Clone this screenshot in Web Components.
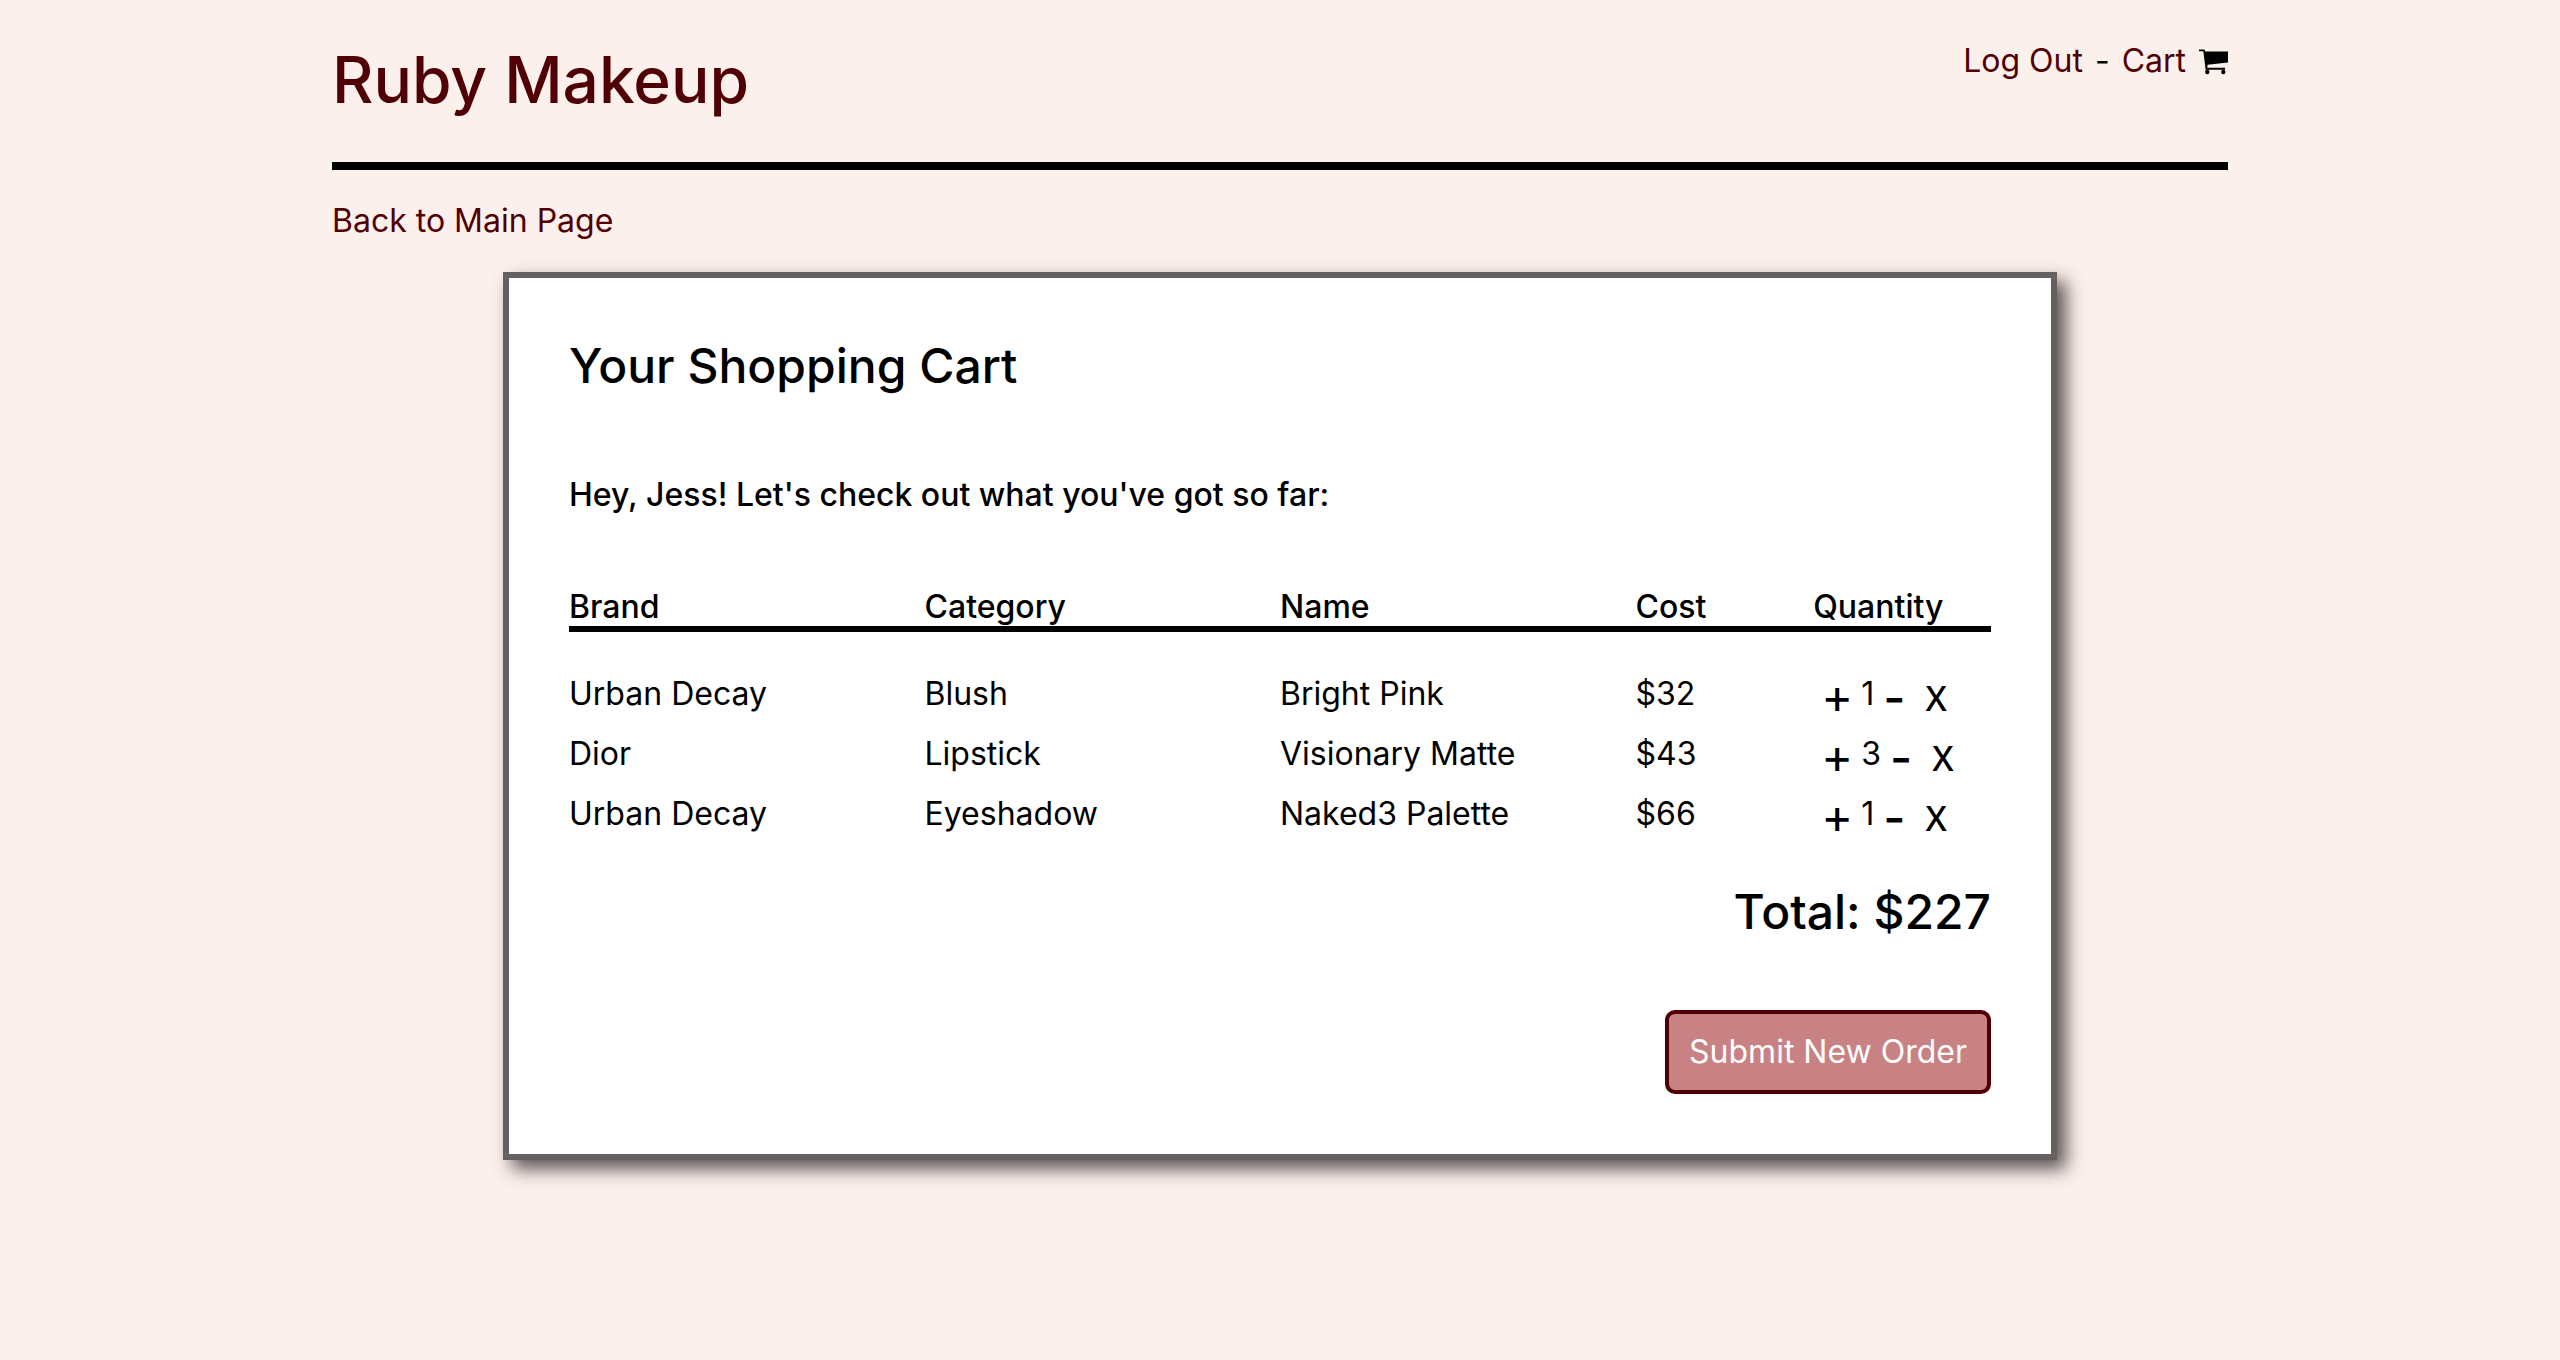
<!DOCTYPE html>
<html lang="en">
<head>
<meta charset="utf-8">
<title>Ruby Makeup</title>
<style>
  body {
    margin: 0;
    min-height: 100vh;
    background: #fcf0ec;
    color: #000;
    font: 400 32px/42px Inter, "Liberation Sans", sans-serif;
  }
</style>
</head>
<body>
<ruby-page>
  <site-header slot="header"></site-header>
  <back-link href="#main">Back to Main Page</back-link>
  <cart-card heading="Your Shopping Cart">
    <cart-table></cart-table>
    <cart-total amount="$227"></cart-total>
    <submit-order>Submit New Order</submit-order>
  </cart-card>
</ruby-page>

<script>
const define = (name, html) => customElements.define(name, class extends HTMLElement {
  constructor() {
    super();
    this.attachShadow({ mode: 'open' }).innerHTML =
      html.replace(/\{(\w+)\}/g, (_, key) => this.getAttribute(key) || '');
  }
});

define('ruby-page', `
  <style>
    :host { display: block; width: 90%; max-width: 1896px; margin: 0 auto; padding-bottom: 80px; }
  </style>
  <slot name="header"></slot>
  <main><slot></slot></main>
`);

define('cart-icon', `
  <style>
    :host { display: inline-block; }
    svg { display: block; width: 30px; height: 26px; }
  </style>
  <svg viewBox="0 0 30 26" aria-hidden="true">
    <path d="M1 .500h5.400l.9 2H30v11L9.600 15.800l-.3 2.900H27v2H7.400V18.500L5.300 2.200H1z"/>
    <circle cx="9.300" cy="23" r="2.200"/><circle cx="25.300" cy="23" r="2.200"/>
  </svg>
`);

define('site-header', `
  <style>
    :host { display: block; }
    header {
      display: flex; justify-content: space-between; align-items: flex-start;
      padding: 40px 0 42px; border-bottom: 8px solid #000;
    }
    h1 { margin: 0; font-size: 64px; line-height: 80px; font-weight: 500; }
    a { color: #500004; text-decoration: none; }
    nav { display: flex; gap: 12px; }
    cart-icon { margin-top: 9px; }
  </style>
  <header>
    <h1><a href="#home">Ruby Makeup</a></h1>
    <nav><a href="#logout">Log Out</a><span>-</span><a href="#cart">Cart</a><cart-icon></cart-icon></nav>
  </header>
`);

define('back-link', `
  <style>
    :host { display: block; margin: 30px 0; }
    a { color: #500004; text-decoration: none; }
  </style>
  <a href="{href}"><slot></slot></a>
`);

define('cart-card', `
  <style>
    :host { display: block; }
    section {
      width: 75%; margin: 0 auto; padding: 60px;
      background: #fff; border: 6px solid #666061;
      box-shadow: 9px 9px 17px #5c5455;
    }
    h2 { margin: 0 0 80px; font-size: 48px; line-height: 56px; font-weight: 500; }
    p { margin: 0 0 72px; font-weight: 500; }
  </style>
  <section>
    <h2>{heading}</h2>
    <p>Hey, Jess! Let's check out what you've got so far:</p>
    <slot></slot>
  </section>
`);

define('quantity-control', `
  <style>
    :host { display: flex; align-items: center; height: 40px; padding-left: 10px; }
    button {
      display: flex; justify-content: center; width: 28px; padding: 8px 0 0;
      border: 0; background: none; color: #000; cursor: pointer;
      font: 500 48px/40px "Noto Sans", sans-serif;
    }
    .value { margin: 0 8px 0 10px; }
    .less { width: 24px; font-family: Inter, sans-serif; }
    .remove { margin-left: 16px; font-size: 35px; }
  </style>
  <button aria-label="Add one">+</button>
  <span class="value">{value}</span>
  <button class="less" aria-label="Take one away">-</button>
  <button class="remove" aria-label="Remove">X</button>
`);

const items = [
  ['Urban Decay', 'Blush', 'Bright Pink', '$32', 1],
  ['Dior', 'Lipstick', 'Visionary Matte', '$43', 3],
  ['Urban Decay', 'Eyeshadow', 'Naked3 Palette', '$66', 1]
];

customElements.define('cart-table', class extends HTMLElement {
  constructor() {
    super();
    const rows = items.map(([brand, category, name, cost, count]) => `
      <tr><td>${brand}</td><td>${category}</td><td>${name}</td><td>${cost}</td>
      <td><quantity-control value="${count}"></quantity-control></td></tr>`).join('');
    this.attachShadow({ mode: 'open' }).innerHTML = `
      <style>
        :host { display: block; }
        table { width: 100%; table-layout: fixed; border-collapse: separate; border-spacing: 0; }
        th, td { padding: 0; text-align: left; }
        th { width: 25%; line-height: 38px; font-weight: 500; border-bottom: 6px solid #000; }
        th:nth-child(n+4) { width: 12.5%; }
        td { height: 60px; vertical-align: middle; }
        tbody::before { content: ""; display: block; height: 32px; }
      </style>
      <table>
        <thead><tr><th>Brand</th><th>Category</th><th>Name</th><th>Cost</th><th>Quantity</th></tr></thead>
        <tbody>${rows}</tbody>
      </table>`;
  }
});

define('cart-total', `
  <style>
    :host { display: block; margin: 40px 0 70px; text-align: right; font-size: 48px; line-height: 56px; font-weight: 500; }
  </style>
  Total: {amount}
`);

define('submit-order', `
  <style>
    :host { display: flex; justify-content: flex-end; }
    button {
      padding: 17px 20px; border: 4px solid #500004; border-radius: 10px;
      background: #c98283; color: #fff; font: inherit; cursor: pointer;
    }
  </style>
  <button><slot></slot></button>
`);
</script>
</body>
</html>
